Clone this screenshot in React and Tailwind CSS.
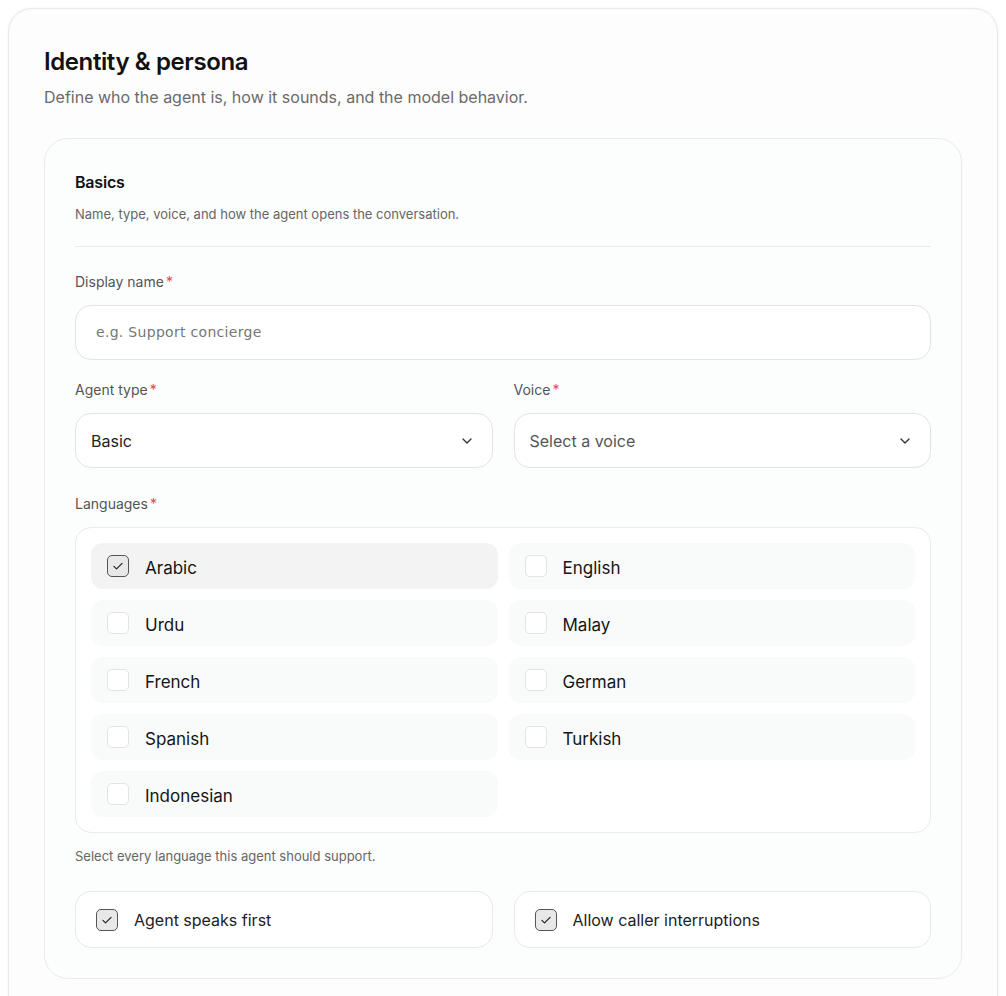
import React from "react";

const Check = () => (
  <svg width="14" height="14" viewBox="0 0 24 24" fill="none" stroke="#222" strokeWidth="2" strokeLinecap="round" strokeLinejoin="round">
    <path d="M5 12.5l4.5 4.5L19 7.5" />
  </svg>
);

const Box = ({ checked, size = "w-[21px] h-[21px]" }) =>
  checked ? (
    <span className={`${size} shrink-0 rounded-[5px] border border-[#555] bg-[#e8e8e8] flex items-center justify-center`}>
      <Check />
    </span>
  ) : (
    <span className={`${size} shrink-0 rounded-[5px] border border-[#e3e3e3] bg-white`} />
  );

const Chevron = () => (
  <svg width="16" height="16" viewBox="0 0 24 24" fill="none" stroke="#333" strokeWidth="2" strokeLinecap="round" strokeLinejoin="round">
    <path d="M6 9l6 6 6-6" />
  </svg>
);

const Label = ({ children }) => (
  <div className="text-[14px] text-[#555] mb-[13px] leading-[20px]">
    {children}
    <span className="text-[#e5484d] ml-[2px]">*</span>
  </div>
);

const langs = [
  ["Arabic", true],
  ["English", false],
  ["Urdu", false],
  ["Malay", false],
  ["French", false],
  ["German", false],
  ["Spanish", false],
  ["Turkish", false],
  ["Indonesian", false],
];

export default function App() {
  return (
    <div className="min-h-[996px] bg-white pt-[8px] px-[8px]" style={{ fontFamily: "Inter, 'Open Sans', sans-serif" }}>
      <div className="rounded-t-[24px] border border-[#e9e9e9] bg-[#fdfdfd] shadow-[0_0_3px_rgba(0,0,0,0.05)] px-[35px] pt-[37px] pb-[20px] min-h-[1000px]">
        <h1 className="text-[24px] font-semibold tracking-[-0.4px] text-[#111] leading-[32px]">Identity &amp; persona</h1>
        <p className="text-[16px] text-[#6a6a6a] mt-[7px] leading-[24px]">Define who the agent is, how it sounds, and the model behavior.</p>

        <div className="mt-[29px] rounded-[24px] border border-[#ebebeb] bg-[#fcfdfd] px-[30px] pt-[32px] pb-[30px]">
          <div className="text-[16px] font-semibold text-[#111] leading-[22px] tracking-[-0.2px]">Basics</div>
          <div className="text-[13px] text-[#666] mt-[12px] leading-[18px]">Name, type, voice, and how the agent opens the conversation.</div>
          <div className="h-px bg-[#ebebeb] mt-[23px] mb-[25px]" />

          <Label>Display name</Label>
          <div className="h-[55px] rounded-[16px] border border-[#e3e3e3] bg-white flex items-center px-[20px]">
            <span className="text-[14px] text-[#777] tracking-[0.3px]" style={{ fontFamily: "'DejaVu Sans', sans-serif" }}>e.g. Support concierge</span>
          </div>

          <div className="grid grid-cols-2 gap-[21px] mt-[20px]">
            <div>
              <Label>Agent type</Label>
              <div className="h-[55px] rounded-[16px] border border-[#e3e3e3] bg-white flex items-center justify-between pl-[15px] pr-[17px]">
                <span className="text-[16px] text-[#222]">Basic</span>
                <Chevron />
              </div>
            </div>
            <div>
              <Label>Voice</Label>
              <div className="h-[55px] rounded-[16px] border border-[#e3e3e3] bg-white flex items-center justify-between pl-[15px] pr-[17px]">
                <span className="text-[16px] text-[#555]">Select a voice</span>
                <Chevron />
              </div>
            </div>
          </div>

          <div className="mt-[26px]">
            <Label>Languages</Label>
            <div className="rounded-[16px] border border-[#ebebeb] bg-white p-[15px] grid grid-cols-2 gap-x-[11px] gap-y-[11px]">
              {langs.map(([name, checked]) => (
                <div
                  key={name}
                  className={`h-[46px] rounded-[12px] flex items-center pl-[16px] gap-[16px] ${checked ? "bg-[#f3f3f3]" : "bg-[#f9fafa]"}`}
                >
                  <Box checked={checked} size="w-[22px] h-[22px]" />
                  <span className="text-[17px] text-[#151515] leading-[24px] pt-[3px]">{name}</span>
                </div>
              ))}
            </div>
            <div className="text-[13px] text-[#666] mt-[14px] leading-[18px]">Select every language this agent should support.</div>
          </div>

          <div className="grid grid-cols-2 gap-[21px] mt-[26px]">
            {["Agent speaks first", "Allow caller interruptions"].map((t) => (
              <div key={t} className="h-[57px] rounded-[16px] border border-[#e9e9e9] bg-white flex items-center pl-[20px] gap-[16px]">
                <Box checked size="w-[22px] h-[22px]" />
                <span className="text-[16px] text-[#222]">{t}</span>
              </div>
            ))}
          </div>
        </div>
      </div>
    </div>
  );
}
